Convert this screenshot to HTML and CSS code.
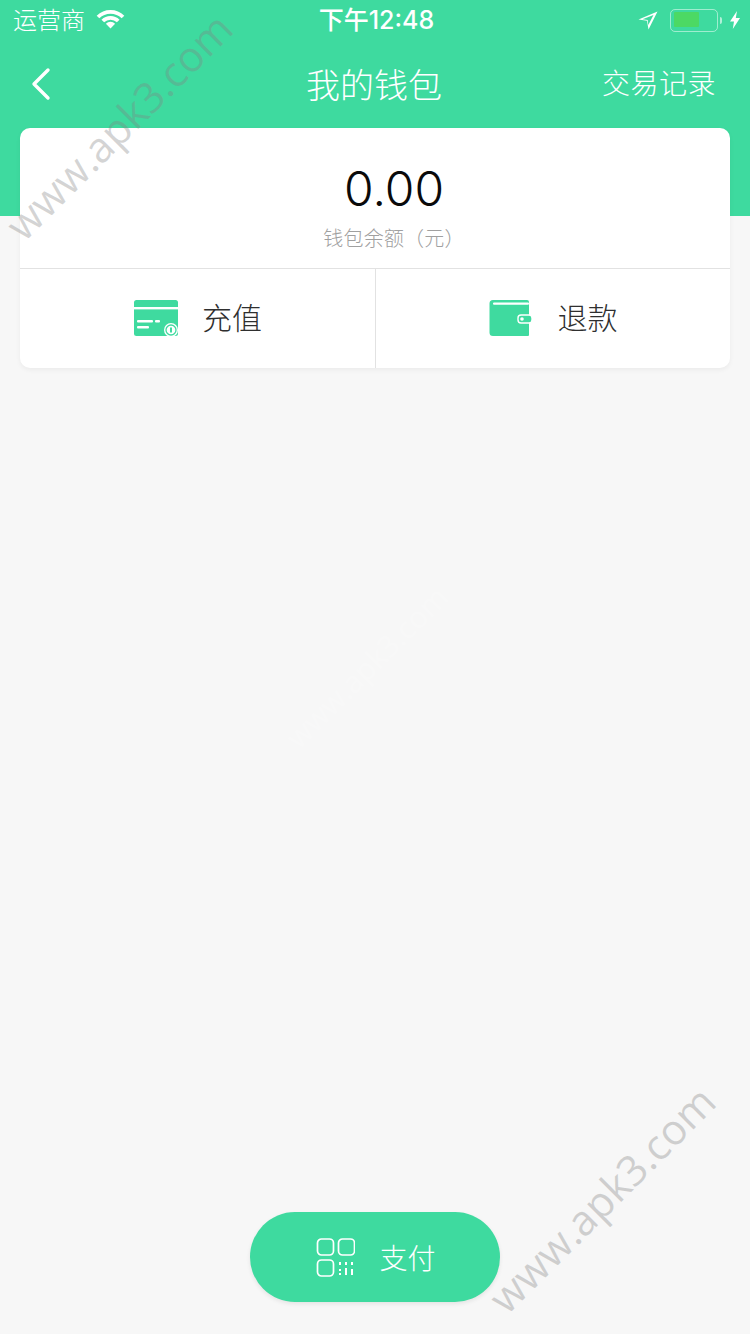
FILE: index.html
```html
<!DOCTYPE html>
<html lang="zh-CN">
<head>
<meta charset="utf-8">
<title>我的钱包</title>
<link rel="stylesheet" href="styles.css">
</head>
<body>
<div class="app">
  <header class="hero">
    <div class="status">
      <div class="status-left">
        <span class="carrier">运营商</span>
        <svg class="wifi" width="29" height="20" viewBox="0 0 29 20"><path d="M2 8a18 18 0 0 1 25 0" fill="none" stroke="#fff" stroke-width="3.800"/><path d="M6.800 12a11 11 0 0 1 15.400 0" fill="none" stroke="#fff" stroke-width="3.800"/><path d="M14.500 19.500l-4.600-4.800a6.500 6.500 0 0 1 9.200 0z" fill="#fff"/></svg>
      </div>
      <span class="clock">下午12:48</span>
      <div class="status-right">
        <svg width="20" height="20" viewBox="0 0 20 20"><path d="M19.500 1.500L.5 9.500l8.500 1.300L10.500 19.500zM15.500 5L10.300 15 9.700 9.900 4.500 9.200z" fill="#fff" fill-rule="evenodd"/></svg>
        <div class="battery"><span class="battery-level"></span></div>
        <span class="battery-cap"></span>
        <svg width="12" height="20" viewBox="0 0 12 20"><path d="M8 1L1 11.500h4L3.800 19 11 8H6.800z" fill="#fff"/></svg>
      </div>
    </div>
    <nav class="nav">
      <svg class="back" width="22" height="34" viewBox="0 0 22 34"><path d="M18 3L4 17l14 14" fill="none" stroke="#fff" stroke-width="3.400" stroke-linecap="round" stroke-linejoin="round"/></svg>
      <h1 class="title">我的钱包</h1>
      <span class="records">交易记录</span>
    </nav>
  </header>

  <section class="card">
    <div class="balance">
      <div class="amount">0.00</div>
      <div class="amount-label">钱包余额（元）</div>
    </div>
    <div class="actions">
      <div class="action">
        <svg class="action-icon" width="46" height="38" viewBox="0 0 46 38">
          <rect x="1" y="1" width="44" height="36" rx="2.500" fill="#3fda9f"/>
          <rect x="1" y="8" width="44" height="2.400" fill="#fff"/>
          <rect x="4" y="21" width="16" height="2.600" rx="1" fill="#fff"/>
          <rect x="22" y="21" width="5" height="2.600" rx="1" fill="#fff"/>
          <rect x="4" y="27" width="12" height="2.600" rx="1" fill="#fff"/>
          <circle cx="38" cy="31" r="7" fill="#fff"/>
          <circle cx="38" cy="31" r="5" fill="none" stroke="#3fda9f" stroke-width="1.300"/>
          <rect x="37" y="28.500" width="2" height="5" fill="#3fda9f"/>
        </svg>
        <span class="action-text">充值</span>
      </div>
      <div class="action action-wide">
        <svg class="action-icon" width="44" height="38" viewBox="0 0 44 38">
          <path d="M4 1h34a2 2 0 0 1 2 2v33a1 1 0 0 1-1 1H4a3.500 3.500 0 0 1-3.500-3.500V4.500A3.500 3.500 0 0 1 4 1z" fill="#3fda9f"/>
          <rect x="4" y="3.500" width="36" height="2.200" rx="1" fill="#fff"/>
          <rect x="29" y="16" width="14" height="8" rx="3" fill="#3fda9f" stroke="#fff" stroke-width="1.400"/>
          <circle cx="33" cy="20" r="1.800" fill="#fff"/>
        </svg>
        <span class="action-text">退款</span>
      </div>
    </div>
  </section>

  <div class="spacer"></div>

  <button class="pay" type="button">
    <svg width="40" height="40" viewBox="0 0 40 40" fill="none" stroke="#fff" stroke-width="1.700">
      <rect x="2.500" y="2" width="16" height="16" rx="4"/>
      <rect x="23.500" y="2" width="16" height="16" rx="4"/>
      <rect x="2.500" y="23" width="16" height="16" rx="4"/>
      <path d="M25 25v3M25 32v2M25 36v2M31 25v3M31 31v7M37 25v3M37 32v6" stroke-width="2"/>
    </svg>
    <span class="pay-text">支付</span>
  </button>

  <!-- site marks laid across the page -->
  <span class="mark mark-top">www.apk3.com</span>
  <span class="mark mark-mid">www.apk3.com</span>
  <span class="mark mark-bottom">www.apk3.com</span>
</div>
</body>
</html>
```

FILE: styles.css
```css
* { box-sizing: border-box; }

html, body {
  margin: 0;
  padding: 0;
}

body {
  font-family: "Noto Sans CJK SC", "Liberation Sans", sans-serif;
  background: #f7f7f7;
}

.app {
  position: relative;
  width: 750px;
  height: 1334px;
  overflow: hidden;
  display: flex;
  flex-direction: column;
  background: #f7f7f7;
}

.hero {
  height: 216px;
  background: #3eda9f;
  color: #fff;
  flex: none;
}

.status {
  height: 40px;
  padding: 0 9px 0 13px;
  display: flex;
  align-items: center;
  justify-content: space-between;
  position: relative;
}

.status-left, .status-right {
  display: flex;
  align-items: center;
}

.status-left { gap: 11px; }

.carrier {
  font-size: 24px;
  font-weight: 300;
  line-height: 38px;
  margin-bottom: 2px;
}

.wifi { margin-bottom: 2px; }

.clock {
  position: absolute;
  left: 0;
  right: 0;
  text-align: center;
  font-family: "Inter", "Noto Sans CJK SC", sans-serif;
  font-size: 25px;
  font-weight: 500;
  line-height: 40px;
  margin-left: 3px;
}

.battery {
  margin-left: 12px;
  width: 48px;
  height: 23px;
  border: 1.500px solid rgba(255, 255, 255, .5);
  border-radius: 5px;
  padding: 2.500px;
}

.battery-level {
  display: block;
  width: 25px;
  height: 15px;
  background: #4cd964;
  border-radius: 1px;
}

.battery-cap {
  width: 2px;
  height: 7px;
  margin: 0 7px 0 2px;
  background: rgba(255, 255, 255, .6);
  border-radius: 0 2px 2px 0;
}

.nav {
  height: 88px;
  padding: 0 34px 0 30px;
  display: flex;
  align-items: center;
  justify-content: space-between;
  position: relative;
}

.title {
  position: absolute;
  left: 0;
  right: 2px;
  margin: 0;
  text-align: center;
  font-size: 34px;
  font-weight: 300;
  line-height: 84px;
}

.records {
  position: relative;
  font-size: 28px;
  font-weight: 300;
  line-height: 40px;
  letter-spacing: 0.5px;
  margin-bottom: 4px;
}

.card {
  flex: none;
  margin: -88px 20px 0;
  height: 240px;
  background: #fff;
  border-radius: 10px;
  box-shadow: 0 2px 5px rgba(0, 0, 0, .05);
  position: relative;
  display: flex;
  flex-direction: column;
}

.balance {
  height: 141px;
  border-bottom: 1px solid #e2e2e2;
  text-align: center;
  padding: 30px 0 0 38px;
}

.amount {
  font-family: "Inter", "Liberation Sans", sans-serif;
  font-size: 48px;
  font-weight: 300;
  line-height: 62px;
  color: #0a0a0a;
}

.amount-label {
  font-size: 20px;
  letter-spacing: 0.2px;
  font-weight: 300;
  line-height: 34px;
  color: #a0a0a0;
  margin-top: 1px;
}

.actions {
  flex: 1;
  display: grid;
  grid-template-columns: 1fr 1fr;
}

.action {
  display: flex;
  align-items: center;
  justify-content: center;
  gap: 23px;
}

.action + .action {
  border-left: 1px solid #e2e2e2;
}

.action-wide { gap: 25px; }

.action-icon { margin-bottom: 2px; }

.action-text {
  font-size: 30px;
  font-weight: 300;
  color: #2f2f2f;
  margin-bottom: 6px;
}

.spacer { flex: 1; }

.pay {
  flex: none;
  align-self: center;
  margin-bottom: 32px;
  width: 250px;
  height: 90px;
  border: 0;
  border-radius: 45px;
  background: #3eda9f;
  box-shadow: 0 2px 4px rgba(0, 0, 0, .08);
  color: #fff;
  font-family: inherit;
  font-size: 28px;
  font-weight: 300;
  display: flex;
  align-items: center;
  justify-content: center;
  gap: 23px;
  padding: 0 0 0 1px;
}

.pay-text { margin-left: 1px; }

.mark {
  position: absolute;
  font-family: "Open Sans", "Liberation Sans", sans-serif;
  font-weight: 400;
  white-space: nowrap;
  transform: rotate(-45deg);
  transform-origin: center;
  line-height: 1;
  pointer-events: none;
}

.mark-top {
  left: -31px;
  top: 105px;
  font-size: 42px;
  color: rgba(130, 130, 130, .34);
}

.mark-mid {
  left: 260px;
  top: 652px;
  font-size: 30px;
  color: rgba(255, 255, 255, .22);
}

.mark-bottom {
  left: 452px;
  top: 1178px;
  font-size: 42px;
  color: rgba(130, 130, 130, .34);
}
```
